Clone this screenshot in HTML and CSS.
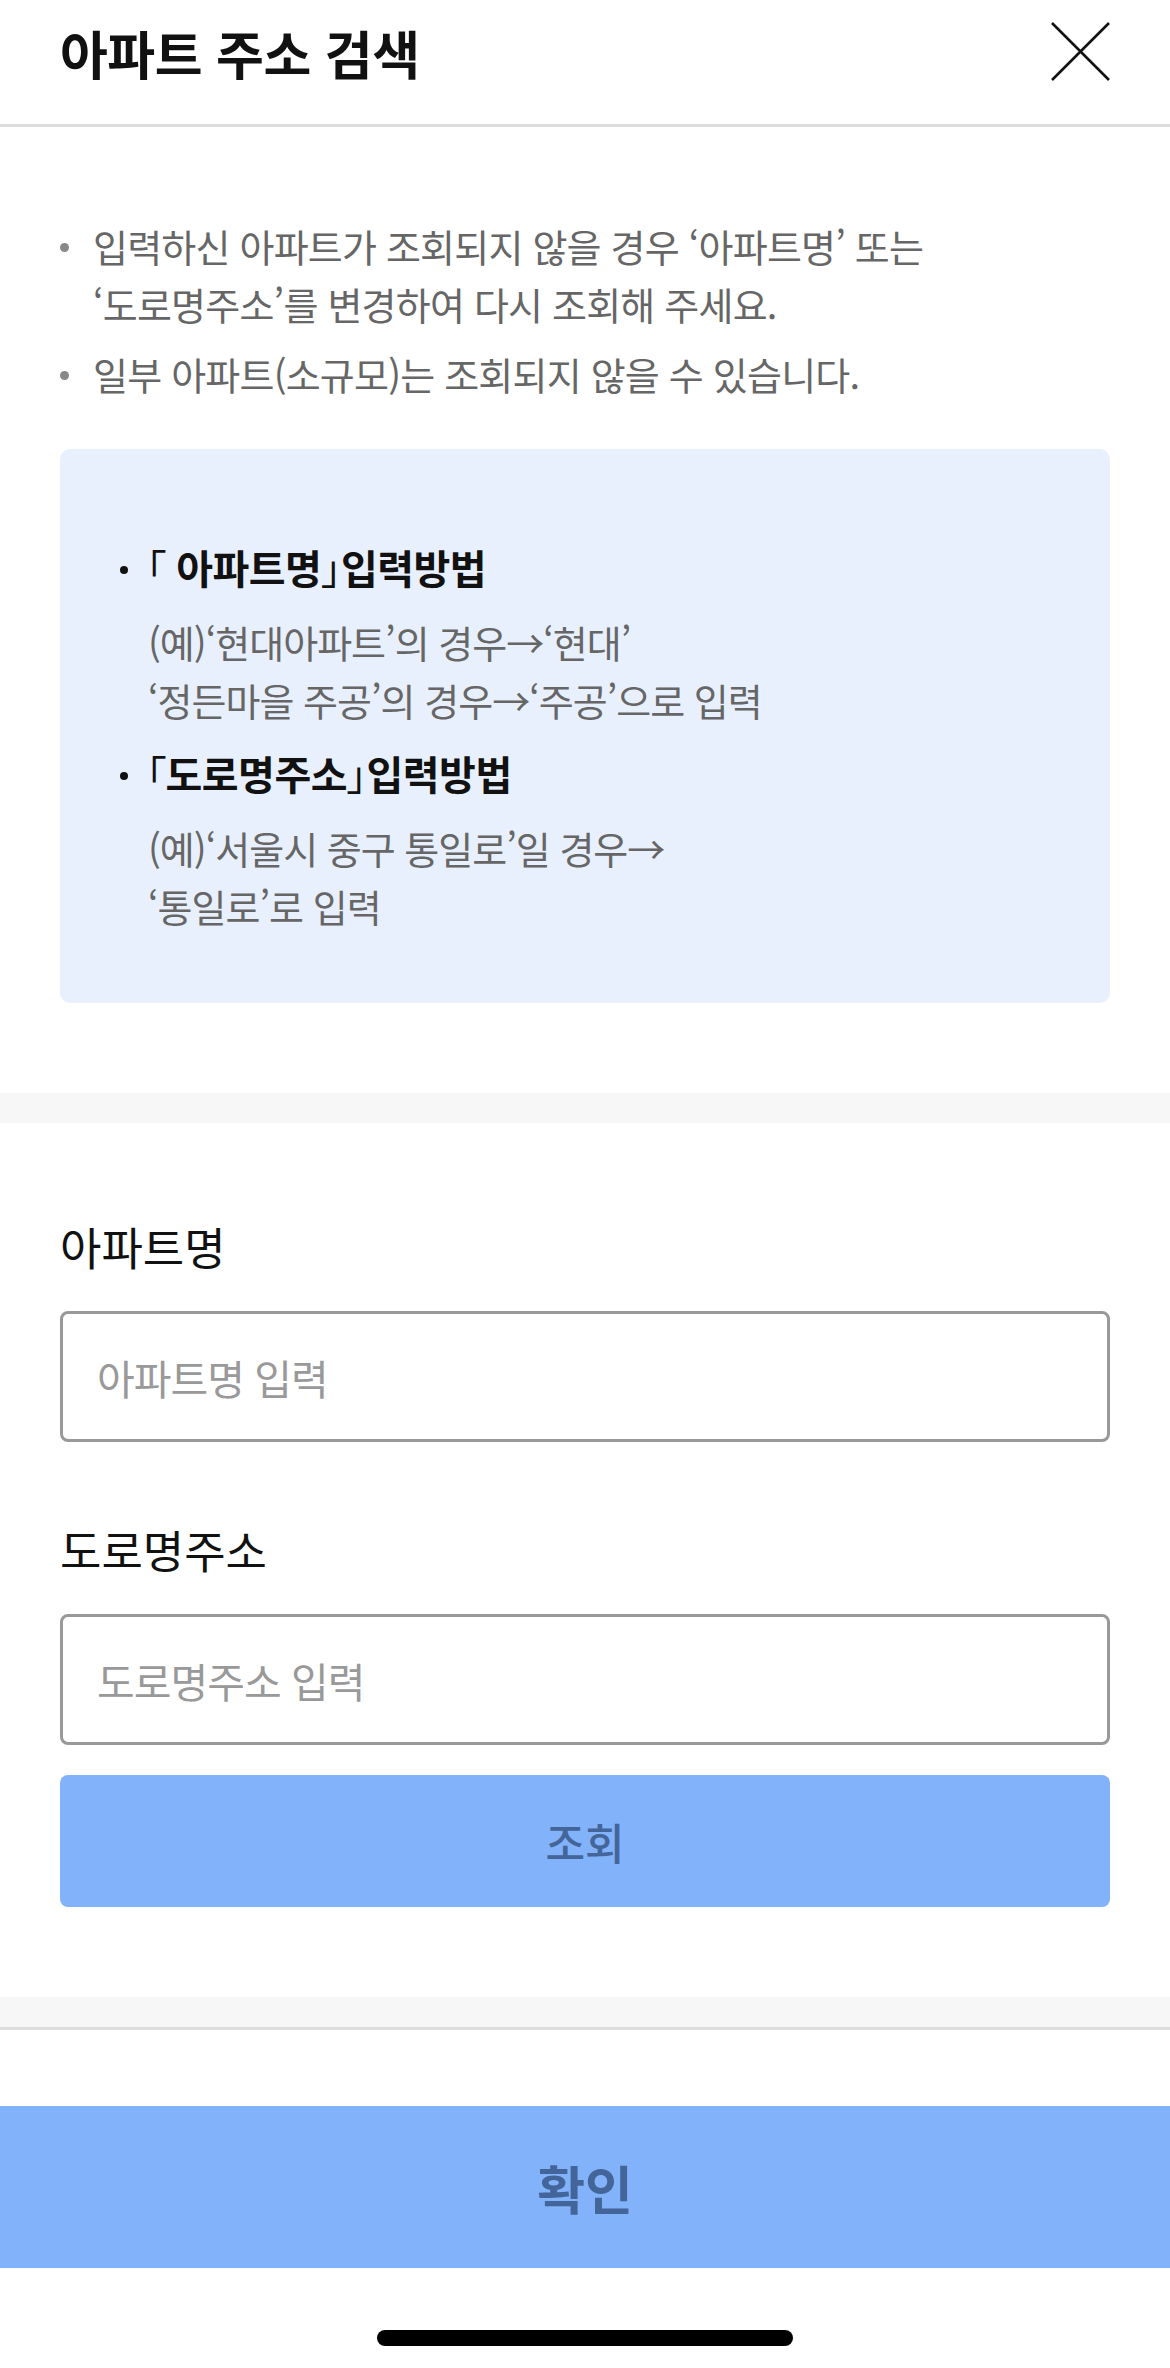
FILE: index.html
```html
<!DOCTYPE html>
<html lang="ko">
<head>
<meta charset="utf-8">
<link rel="stylesheet" href="styles.css">
</head>
<body>
<div class="screen">
  <header class="header">
    <h1 class="title">아파트 주소 검색</h1>
    <button class="close" aria-label="닫기">
      <svg width="60" height="60" viewBox="0 0 60 60"><path d="M1 1 L58 58 M58 1 L1 58" stroke="#111" stroke-width="2.6" fill="none"/></svg>
    </button>
  </header>

  <section class="notice">
    <ul class="notes">
      <li>입력하신 아파트가 조회되지 않을 경우 ‘아파트명’ 또는<br>‘도로명주소’를 변경하여 다시 조회해 주세요.</li>
      <li>일부 아파트(소규모)는 조회되지 않을 수 있습니다.</li>
    </ul>
    <div class="guide">
      <div class="guide-item">
        <p class="guide-head"><span class="br">「</span> 아파트명<span class="br">」</span>입력방법</p>
        <p class="guide-desc">(예)‘현대아파트’의 경우→‘현대’<br>‘정든마을 주공’의 경우→‘주공’으로 입력</p>
      </div>
      <div class="guide-item">
        <p class="guide-head"><span class="br">「</span>도로명주소<span class="br">」</span>입력방법</p>
        <p class="guide-desc">(예)‘서울시 중구 통일로’일 경우→<br>‘통일로’로 입력</p>
      </div>
    </div>
  </section>

  <div class="band"></div>

  <section class="form">
    <label class="label">아파트명</label>
    <div class="input"><span class="placeholder">아파트명 입력</span></div>
    <label class="label label2">도로명주소</label>
    <div class="input"><span class="placeholder">도로명주소 입력</span></div>
    <button class="search">조회</button>
  </section>

  <div class="band band-bottom"></div>

  <div class="footer">
    <button class="confirm">확인</button>
    <div class="home-wrap"><div class="home"></div></div>
  </div>
</div>
</body>
</html>
```

FILE: styles.css
```css
* { box-sizing: border-box; margin: 0; padding: 0; }
html, body { background: #fff; }
body {
  font-family: "Noto Sans CJK KR", "Noto Sans", sans-serif;
  width: 1170px;
  height: 2368px;
  overflow: hidden;
}
.screen { display: flex; flex-direction: column; height: 2368px; }

.header {
  height: 127px;
  border-bottom: 3px solid #dddddd;
  display: flex;
  align-items: center;
  justify-content: space-between;
  padding: 0 60px 20px 60px;
}
.title {
  font-size: 52px;
  font-weight: 700;
  color: #111;
  letter-spacing: -0.5px;
}
.close {
  border: none;
  background: none;
  width: 60px;
  height: 60px;
  margin-right: -1px;
  display: flex;
}

.notice { padding: 90px 60px 90px; }
.notes { list-style: none; }
.notes li {
  position: relative;
  padding-left: 33px;
  font-size: 38px;
  line-height: 58px;
  color: #666;
  letter-spacing: -0.8px;
  margin-bottom: 12px;
}
.notes li::before {
  content: "";
  position: absolute;
  left: 0;
  top: 26px;
  width: 9px;
  height: 9px;
  border-radius: 50%;
  background: #888;
}

.guide {
  margin-top: 46px;
  background: #e8f0fe;
  border-radius: 10px;
  padding: 90px 60px 80px;
  height: 554px;
}
.guide-item + .guide-item { margin-top: 16px; }
.guide-head {
  position: relative;
  padding-left: 26px;
  font-size: 40px;
  font-weight: 700;
  color: #111;
  letter-spacing: -0.5px;
  line-height: 56px;
}
.br { font-feature-settings: "palt" 1; font-weight: 400; }
.guide-head::before {
  content: "";
  position: absolute;
  left: 0;
  top: 27px;
  width: 8px;
  height: 8px;
  border-radius: 50%;
  background: #111;
}
.guide-desc {
  margin-top: 18px;
  padding-left: 28px;
  font-size: 38px;
  line-height: 58px;
  color: #666;
  letter-spacing: -1px;
}

.band { height: 30px; background: #f7f7f7; }
.band-bottom { border-bottom: 3px solid #dddddd; height: 33px; }

.form { display: flex; flex-direction: column; padding: 96px 60px 90px; }
.label {
  font-size: 45px;
  color: #111;
  line-height: 56px;
}
.label2 { margin-top: 80px; }
.input {
  margin-top: 36px;
  height: 131px;
  border: 3px solid #999;
  border-radius: 8px;
  display: flex;
  align-items: center;
  padding-left: 34px;
}
.placeholder {
  font-size: 41px;
  color: #999;
  letter-spacing: -1px;
}
.search {
  margin-top: 30px;
  height: 132px;
  border: none;
  border-radius: 8px;
  background: #82b2f9;
  color: #43659a;
  font-family: inherit;
  font-size: 43px;
  font-weight: 500;
}

.footer { flex: 1; display: flex; flex-direction: column; padding-top: 76px; }
.confirm {
  height: 162px;
  border: none;
  background: #82b2f9;
  color: #43659a;
  font-family: inherit;
  font-size: 52px;
  font-weight: 700;
}
.home-wrap { flex: 1; display: flex; justify-content: center; padding-top: 62px; }
.home { width: 416px; height: 16px; border-radius: 8px; background: #000; }
```
